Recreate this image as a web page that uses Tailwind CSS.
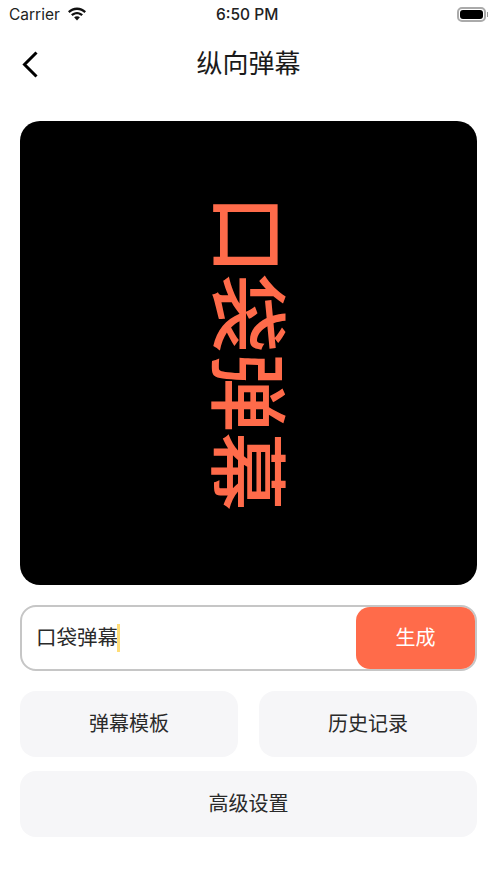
<!DOCTYPE html>
<html lang="zh-CN">
<head>
  <meta charset="UTF-8" />
  <title>纵向弹幕</title>
  <script src="https://cdn.jsdelivr.net/npm/@tailwindcss/browser@4"></script>
</head>
<body class="bg-white h-[883px] w-[497px] overflow-hidden font-['Inter','Noto_Sans_CJK_SC',sans-serif] text-[#1a1a1a]">
  <!-- status bar -->
  <div class="relative flex items-center justify-between h-[29px] pl-[9px] pr-[9px] text-[15.500px] text-[#222]">
    <div class="flex items-center gap-[7px]">
      <span>Carrier</span>
      <svg width="20" height="15" viewBox="0 0 20 15" fill="#111">
        <path d="M10 2.900c2.800 0 5.400 1.100 7.400 3l1.600-1.700C16.600 1.900 13.400.4 10 .4S3.400 1.900 1 4.200l1.600 1.700c2-1.900 4.600-3 7.400-3z"/>
        <path d="M10 7.300c1.600 0 3.100.6 4.300 1.700L16 7.300c-1.600-1.500-3.800-2.400-6-2.400s-4.400.9-6 2.400L5.700 9c1.200-1.100 2.700-1.700 4.300-1.700z"/>
        <path d="M10 9.200c-1.100 0-2.100.4-2.900 1.100l2.900 3.300 2.900-3.300c-.8-.7-1.800-1.100-2.900-1.100z"/>
      </svg>
    </div>
    <span class="absolute left-[216px] font-medium">6:50 PM</span>
    <div class="flex items-center">
      <div class="w-[29px] h-[15px] rounded-[5px] border-2 border-[#aaa] p-[1px]">
        <div class="w-full h-full rounded-[3px] bg-black"></div>
      </div>
      <div class="w-[1px] h-[5px] ml-[1px] bg-[#999]"></div>
    </div>
  </div>

  <!-- nav -->
  <div class="relative flex items-center justify-center h-[70px] text-[26px]">
    <svg class="absolute left-[22px] top-[22px]" width="16" height="27" viewBox="0 0 16 27" fill="none" stroke="#000" stroke-width="3">
      <path d="M14.500 1.500 2.500 13.500l12 12"/>
    </svg>
    <span class="-mt-[1px]">纵向弹幕</span>
  </div>

  <div class="px-[20px]">
    <!-- preview -->
    <div class="mt-[22px] h-[464px] bg-black rounded-[20px] flex items-center justify-center">
      <span class="-ml-[5px] [writing-mode:vertical-rl] [text-orientation:sideways] whitespace-nowrap text-[79px] leading-none font-medium text-[#ff6b4a]">口袋弹幕</span>
    </div>

    <!-- input -->
    <div class="mt-[20px] h-[66px] flex items-center justify-between rounded-[16px] border-2 border-[#c6c6c6] bg-white">
      <div class="flex items-center pl-[14px] text-[20.500px] text-[#2a2a2a]">
        <span>口袋弹幕</span>
        <span class="shrink-0 w-[3px] h-[28px] -ml-[1px] bg-[#ffdd77]"></span>
      </div>
      <button class="w-[119px] h-[62px] rounded-[14px] bg-[#ff6b4a] text-white text-[20px]">生成</button>
    </div>

    <!-- actions -->
    <div class="mt-[20px] grid grid-cols-2 gap-x-[21px] gap-y-[14px] text-[20px] text-[#2a2a2a]">
      <button class="h-[66px] rounded-[16px] bg-[#f6f6f8]">弹幕模板</button>
      <button class="h-[66px] rounded-[16px] bg-[#f6f6f8]">历史记录</button>
      <button class="col-span-2 h-[66px] rounded-[16px] bg-[#f6f6f8]">高级设置</button>
    </div>
  </div>
</body>
</html>
